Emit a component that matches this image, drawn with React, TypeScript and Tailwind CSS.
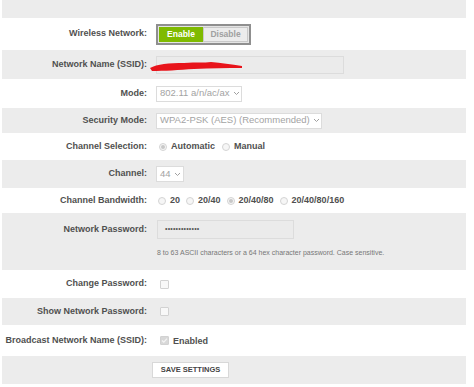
import type { ReactNode } from 'react';

function Row({ label, gray, h, children }: { label: string; gray?: boolean; h: string; children?: ReactNode }) {
  return (
    <div className={`flex items-center ${h} ${gray ? 'bg-[#ececec]' : 'bg-white'}`}>
      <div className="w-[146px] shrink-0 text-right pr-[1px] text-[9px] font-bold text-[#505050]">{label}</div>
      <div className="ml-[8px] flex items-center text-[9px] text-[#505050]">{children}</div>
    </div>
  );
}

function Radio({ on }: { on?: boolean }) {
  return (
    <span className="inline-flex h-[8px] w-[8px] items-center justify-center rounded-full border border-[#d4d4d4] bg-[#f6f6f6]">
      {on && <span className="h-[4px] w-[4px] rounded-full bg-[#c8c8c8]" />}
    </span>
  );
}

function Check({ on }: { on?: boolean }) {
  return (
    <span className={`inline-flex h-[9px] w-[9px] items-center justify-center rounded-[1px] border border-[#d2d2d2] ${on ? 'bg-[#d8d8d8]' : 'bg-[#f8f8f8]'}`}>
      {on && (
        <svg width="7" height="7" viewBox="0 0 7 7">
          <path d="M1 3.5 L2.8 5.2 L6 1.6" stroke="#f4f4f4" strokeWidth="1.2" fill="none" />
        </svg>
      )}
    </span>
  );
}

function Select({ text, w }: { text: string; w: string }) {
  return (
    <div className={`flex h-[16px] ${w} items-center justify-between whitespace-nowrap border border-[#dcdcdc] bg-white pl-[3px] pr-[3px] text-[9.5px] font-normal text-[#a3a3a3]`}>
      <span>{text}</span>
      <svg width="7" height="5" viewBox="0 0 7 5" className="ml-[3px] shrink-0">
        <path d="M1 1 L3.5 3.5 L6 1" stroke="#a0a0a0" strokeWidth="1" fill="none" />
      </svg>
    </div>
  );
}

export default function App() {
  return (
    <div className="h-[387px] w-[474px] bg-white pl-[2px] pr-[8px]" style={{ fontFamily: '"Liberation Sans", Arial, sans-serif' }}>
      <div className="h-[18px] bg-[#ececec]" />
      <Row label="Wireless Network:" h="h-[32px]">
        <div className="flex h-[21px] items-center border-2 border-[#8f8f8f] bg-[#e4e4e4] p-[1px]">
          <div className="flex h-[15px] w-[44px] items-center justify-center bg-[#7fba00] text-[8.5px] font-bold text-white">Enable</div>
          <div className="flex h-[15px] w-[45px] items-center justify-center border border-[#c9c9c9] bg-[#ececec] text-[8.5px] font-bold text-[#a0a0a0]">Disable</div>
        </div>
      </Row>
      <Row label="Network Name (SSID):" gray h="h-[29px]">
        <div className="relative h-[18px] w-[188px] border border-[#dcdcdc] bg-[#ebebeb]">
          <svg className="absolute left-[-8px] top-[2px]" width="95" height="14" viewBox="0 0 95 14">
            <path d="M1 9 C8 5 20 4 35 4 C48 3 55 4 62 3 C72 4 82 5 93 7 L93 9 C78 9 62 9 45 10 C30 11 15 12 3 12 Z" fill="#e8141b" />
          </svg>
        </div>
      </Row>
      <Row label="Mode:" h="h-[29px]">
        <Select text="802.11 a/n/ac/ax" w="w-[86px]" />
      </Row>
      <Row label="Security Mode:" gray h="h-[25px]">
        <Select text="WPA2-PSK (AES) (Recommended)" w="w-[166px]" />
      </Row>
      <Row label="Channel Selection:" h="h-[27px]">
        <div className="flex items-center gap-[4px] font-bold">
          <span className="ml-[3px] flex"><Radio on /></span>
          <span>Automatic</span>
          <span className="ml-[3px] flex"><Radio /></span>
          <span>Manual</span>
        </div>
      </Row>
      <Row label="Channel:" gray h="h-[28px]">
        <Select text="44" w="w-[28px]" />
      </Row>
      <Row label="Channel Bandwidth:" h="h-[25px]">
        <div className="flex items-center gap-[4px] font-bold">
          <span className="ml-[2px] flex"><Radio /></span>
          <span>20</span>
          <span className="ml-[2px] flex"><Radio /></span>
          <span>20/40</span>
          <span className="ml-[2px] flex"><Radio on /></span>
          <span>20/40/80</span>
          <span className="ml-[2px] flex"><Radio /></span>
          <span>20/40/80/160</span>
        </div>
      </Row>
      <div className="flex h-[57px] bg-[#ececec] pt-[7px]">
        <div className="flex h-[19px] w-[146px] shrink-0 items-center justify-end pr-[1px] text-[9px] font-bold text-[#505050]">Network Password:</div>
        <div className="ml-[9px] flex flex-col">
          <div className="flex h-[19px] w-[137px] items-center border border-[#dcdcdc] bg-[#ebebeb] pl-[7px] text-[7px] tracking-[0.2px] text-[#555]">•••••••••••••</div>
          <div className="mt-[9px] text-[7px] text-[#777]">8 to 63 ASCII characters or a 64 hex character password. Case sensitive.</div>
        </div>
      </div>
      <Row label="Change Password:" h="h-[28px]">
        <span className="ml-[4px] flex"><Check /></span>
      </Row>
      <Row label="Show Network Password:" gray h="h-[27px]">
        <span className="ml-[4px] flex"><Check /></span>
      </Row>
      <Row label="Broadcast Network Name (SSID):" h="h-[31px]">
        <div className="flex items-center gap-[4px] font-bold">
          <span className="ml-[4px] flex"><Check on /></span>
          <span className="pt-[3px]">Enabled</span>
        </div>
      </Row>
      <div className="flex h-[28px] items-center bg-[#ececec]">
        <div className="ml-[150px] flex h-[16px] w-[77px] items-center justify-center border border-[#d8d8d8] bg-white text-[7.5px] font-bold text-[#444]">SAVE SETTINGS</div>
      </div>
    </div>
  );
}
